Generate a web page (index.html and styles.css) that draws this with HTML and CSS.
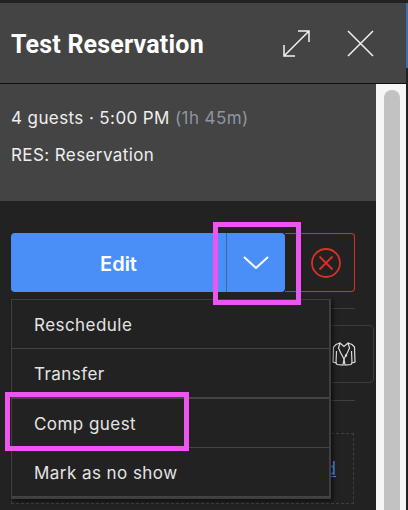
FILE: index.html
```html
<!DOCTYPE html>
<html lang="en">
<head>
    <meta charset="UTF-8">
    <meta name="viewport" content="width=device-width, initial-scale=1.0">
    <title>Test Reservation</title>
    <link rel="stylesheet" href="styles.css">
</head>
<body>
    <div class="page">
        <div class="panel">
            <div class="panel-header">
                <h1>Test Reservation</h1>
                <div class="header-icons">
                    <svg class="header-icon" viewBox="0 0 27 27">
                        <path d="M1 26 L26 1 M15 1 H26 V12 M1 15 V26 H12"/>
                    </svg>
                    <svg class="header-icon" viewBox="0 0 27 27">
                        <path d="M1 1 L26 26 M26 1 L1 26"/>
                    </svg>
                </div>
            </div>

            <div class="panel-row">
                <div class="panel-main">
                    <div class="info">
                        <p>4 guests &middot; 5:00 PM <span class="duration">(1h 45m)</span></p>
                        <p>RES: Reservation</p>
                    </div>

                    <div class="details">
                        <div class="actions">
                            <div class="edit-btn">
                                <div class="edit-label">Edit</div>
                                <div class="edit-toggle">
                                    <svg class="chevron" viewBox="0 0 26 13">
                                        <path d="M1 1 L13 12 L25 1"/>
                                    </svg>
                                </div>
                            </div>
                            <div class="cancel-btn">
                                <svg class="cancel-icon" viewBox="0 0 30 30">
                                    <circle cx="15" cy="15" r="14"/>
                                    <path d="M8.5 8.5 L21.5 21.5 M21.5 8.5 L8.5 21.5"/>
                                </svg>
                            </div>
                        </div>

                        <div class="rule rule-top"></div>
                        <div class="tag-row">
                            <div class="tag-box">
                                <svg class="jacket" viewBox="0 0 24 24">
                                    <path d="M8 1 L4 2.5 L1.5 5 L1 20 L4 21 L5 22.5 L11 23 L12 17 L13 23 L19 22.5 L20 21 L23 20 L22.5 5 L20 2.5 L16 1"/>
                                    <path d="M8 1 L6.5 6 L8.5 10.5 L12 17 L15.5 10.5 L17.5 6 L16 1 L12 4.5 Z"/>
                                    <path d="M4.5 9 L4 21 M19.5 9 L20 21"/>
                                    <circle cx="14" cy="13.5" r="0.6"/>
                                </svg>
                            </div>
                        </div>
                        <div class="rule rule-bottom"></div>

                        <div class="notes-box">
                            <a class="notes-link" href="#">Add</a>
                        </div>
                    </div>

                    <div class="dropdown">
                        <div class="dropdown-item">Reschedule</div>
                        <div class="dropdown-item">Transfer</div>
                        <div class="dropdown-item">Comp guest</div>
                        <div class="dropdown-item">Mark as no show</div>
                    </div>
                </div>

                <div class="scrollbar">
                    <div class="scroll-thumb"></div>
                </div>
            </div>
        </div>
        <div class="edge">
            <div class="edge-blue"></div>
        </div>

        <!-- Highlight boxes drawn over the screenshot -->
        <div class="highlight highlight-toggle"></div>
        <div class="highlight highlight-comp"></div>
    </div>
</body>
</html>
```

FILE: styles.css
```css
html, body {
    height: 100%;
}
body {
    margin: 0;
    background-color: #222;
    color: #eee;
    font-family: Inter, "Liberation Sans", sans-serif;
    overflow: hidden;
}

.page {
    position: relative;
    display: flex;
    height: 507px;
    padding-top: 3px;
    overflow: hidden;
}
.panel {
    width: 406px;
    display: flex;
    flex-direction: column;
}
.edge {
    width: 2px;
}
.edge-blue {
    height: 65px;
    background-color: #3f6eaa;
}

/* Header */
.panel-header {
    flex: none;
    height: 81px;
    box-sizing: border-box;
    padding: 2px 32px 0 11px;
    display: flex;
    align-items: center;
    justify-content: space-between;
    background-color: #444;
    border-bottom: 1px solid #111;
}
h1 {
    margin: 0;
    font-family: Roboto, sans-serif;
    font-size: 25px;
    font-weight: 700;
    letter-spacing: 0.2px;
    color: #fff;
}
.header-icons {
    display: flex;
    gap: 37px;
    margin-bottom: 2px;
}
.header-icon {
    width: 27px;
    height: 27px;
    fill: none;
    stroke: #f2f2f2;
    stroke-width: 1.5;
}

.panel-row {
    display: flex;
    flex: 1;
    min-height: 0;
}
.panel-main {
    position: relative;
    width: 376px;
}

/* Guest info */
.info {
    height: 117px;
    box-sizing: border-box;
    padding: 25px 11px 0;
    background-color: #444;
    font-size: 17px;
    letter-spacing: 0.4px;
}
.info p {
    margin: 0 0 18px;
    line-height: 19px;
}
.duration {
    color: #8f95a3;
}

/* Actions */
.details {
    padding: 32px 0 0 11px;
}
.actions {
    display: flex;
    width: 344px;
    height: 59px;
}
.edit-btn {
    display: flex;
    width: 274px;
    background-color: #4a8ff7;
    border-radius: 4px;
    color: #fff;
    font-size: 20px;
    font-weight: 600;
}
.edit-label {
    flex: 1;
    display: flex;
    align-items: center;
    justify-content: center;
    padding-top: 2px;
}
.edit-toggle {
    width: 58px;
    display: flex;
    align-items: center;
    justify-content: center;
    border-left: 1px solid #39699f;
}
.chevron {
    width: 26px;
    height: 13px;
    fill: none;
    stroke: #fff;
    stroke-width: 2;
}
.cancel-btn {
    flex: 1;
    display: flex;
    align-items: center;
    justify-content: flex-end;
    padding-right: 13px;
    border: 1px solid #d9302a;
    border-left: none;
    border-radius: 0 4px 4px 0;
}
.cancel-icon {
    width: 30px;
    height: 30px;
    fill: none;
    stroke: #d9302a;
    stroke-width: 1.8;
}

.rule {
    width: 344px;
    height: 1px;
    background-color: #3f3f3f;
}
.rule-top {
    margin-top: 16px;
}
.tag-row {
    display: flex;
    justify-content: flex-end;
    width: 363px;
    margin-top: 16px;
}
.tag-box {
    width: 80px;
    height: 58px;
    box-sizing: border-box;
    padding-left: 37px;
    display: flex;
    align-items: center;
    border: 1px solid #3c3c3c;
    border-radius: 4px;
}
.jacket {
    width: 24px;
    height: 24px;
    fill: none;
    stroke: #ddd;
    stroke-width: 1.2;
}
.rule-bottom {
    margin-top: 17px;
}
.notes-box {
    width: 343px;
    height: 71px;
    box-sizing: border-box;
    margin-top: 32px;
    padding: 24px 17px 0 0;
    text-align: right;
    border: 1px dashed #3f3f3f;
}
.notes-link {
    color: #4a8ff7;
    font-size: 18px;
}

/* Dropdown menu */
.dropdown {
    position: absolute;
    top: 215px;
    left: 11px;
    width: 320px;
    box-sizing: border-box;
    background-color: #222;
    border: 1px solid #3f3f3f;
    border-right-width: 2px;
    border-bottom-width: 2px;
    box-shadow: 2px 2px 4px rgba(0, 0, 0, 0.6);
}
.dropdown-item {
    height: 49.25px;
    box-sizing: border-box;
    padding: 2px 0 0 22px;
    display: flex;
    align-items: center;
    font-size: 17px;
    letter-spacing: 0.45px;
    color: #e4e4e4;
    border-bottom: 1px solid #444;
}
.dropdown-item:nth-child(2) {
    border-bottom-width: 2px;
}

/* Scrollbar */
.scrollbar {
    flex: 1;
    padding: 6px 4px 0 8px;
    background-color: #f6f6f6;
}
.scroll-thumb {
    height: 100%;
    width: 16px;
    background-color: #c2c2c2;
    border-radius: 8px 8px 0 0;
}

/* Highlight boxes */
.highlight {
    position: absolute;
    box-sizing: border-box;
    border: 5px solid #ee55f0;
}
.highlight-toggle {
    left: 213px;
    top: 222px;
    width: 88px;
    height: 83px;
}
.highlight-comp {
    left: 5px;
    top: 392px;
    width: 184px;
    height: 59px;
}
```
